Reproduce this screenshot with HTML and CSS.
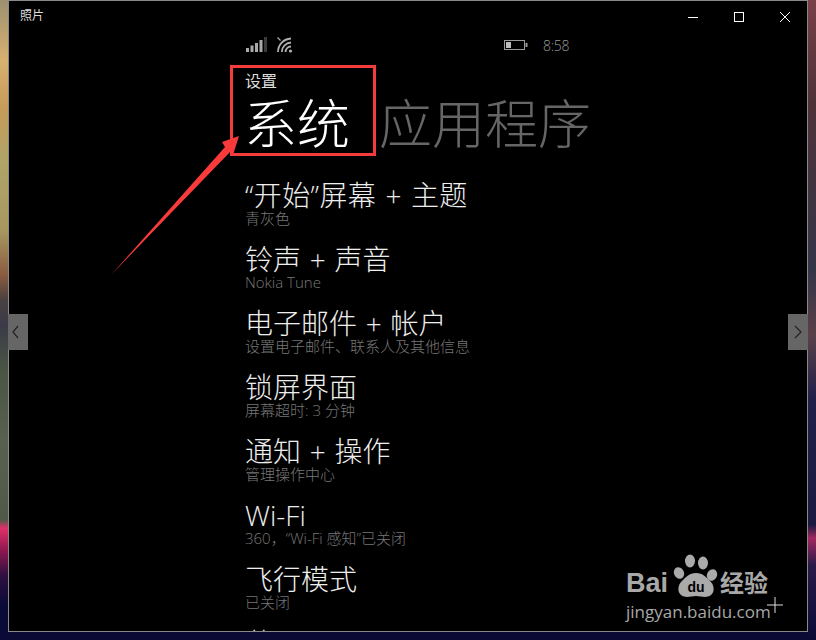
FILE: index.html
```html
<!DOCTYPE html>
<html>
    <head>
        <meta charset="UTF-8">
        <meta name="viewport" content="width=device-width, initial-scale=1.0">
        <title>照片</title>
        <link rel="stylesheet" href="styles.css">
    </head>
    <body>
        <div id="win">
            <div class="titlebar">
                <span class="apptitle">照片</span>
                <div class="winbtns">
                    <svg width="46" height="30" viewBox="0 0 46 30"><path d="M18 15.500h10" stroke="#fff" fill="none"/></svg>
                    <svg width="46" height="30" viewBox="0 0 46 30"><rect x="18.500" y="10.500" width="9" height="9" stroke="#fff" fill="none"/></svg>
                    <svg width="46" height="30" viewBox="0 0 46 30"><path d="M18 10l10 10M28 10l-10 10" stroke="#fff" fill="none"/></svg>
                </div>
            </div>
            <div id="phone">
                <div class="status">
                    <svg class="signal" width="22" height="16" viewBox="0 0 22 16">
                        <rect x="0" y="11" width="3" height="4" fill="#aaa"/>
                        <rect x="4.500" y="8.500" width="3" height="6.500" fill="#aaa"/>
                        <rect x="9" y="6" width="3" height="9" fill="#aaa"/>
                        <rect x="13.500" y="3" width="3" height="12" fill="#aaa"/>
                        <rect x="18" y="0" width="3" height="15" fill="#3a3a3a"/>
                    </svg>
                    <svg class="wifi" width="16" height="16" viewBox="0 0 16 16">
                        <path d="M0.500 0.500l3 3" stroke="#aaa" stroke-width="1.300" fill="none"/>
                        <path d="M1 15C1 8 6 2 14 1.500M4.800 15C4.800 10 8.500 6 14 5.500M8.600 15c0-3 2.200-5.400 5.400-5.500" stroke="#b0b0b0" stroke-width="1.800" fill="none"/>
                        <circle cx="13.500" cy="14" r="1.600" fill="#b0b0b0"/>
                    </svg>
                    <svg class="batt" width="25" height="12" viewBox="0 0 25 12">
                        <rect x="0.500" y="1.500" width="20" height="9" stroke="#999" fill="none"/>
                        <rect x="2" y="3" width="5" height="6" fill="#bbb"/>
                        <rect x="21.500" y="4" width="2" height="4" fill="#999"/>
                    </svg>
                    <span class="clock">8:58</span>
                </div>
                <div class="pivot-label">设置</div>
                <div class="pivot">
                    <span class="on">系统</span>
                    <span class="off">应用程序</span>
                </div>
                <div class="item"><div class="name wide">“开始”屏幕 + 主题</div><div class="sub">青灰色</div></div>
                <div class="item"><div class="name">铃声 + 声音</div><div class="sub">Nokia Tune</div></div>
                <div class="item"><div class="name">电子邮件 + 帐户</div><div class="sub">设置电子邮件、联系人及其他信息</div></div>
                <div class="item"><div class="name">锁屏界面</div><div class="sub">屏幕超时: 3 分钟</div></div>
                <div class="item"><div class="name">通知 + 操作</div><div class="sub">管理操作中心</div></div>
                <div class="item"><div class="name">Wi-Fi</div><div class="sub">360，“Wi-Fi 感知”已关闭</div></div>
                <div class="item"><div class="name">飞行模式</div><div class="sub">已关闭</div></div>
                <div class="item"><div class="name">蓝牙</div></div>
            </div>
        </div>

        <!-- things on top of the window -->
        <div class="nav" id="prev"><svg width="20" height="36" viewBox="0 0 20 36"><path d="M10 12l-5 6 5 6" stroke="#222" stroke-width="1.200" fill="none"/></svg></div>
        <div class="nav" id="next"><svg width="20" height="36" viewBox="0 0 20 36"><path d="M7 12l6 6-6 6" stroke="#222" stroke-width="1.200" fill="none"/></svg></div>
        <div id="redbox"></div>
        <svg id="arrow" width="140" height="150" viewBox="105 130 140 150">
            <polygon points="111,275 225,147 222,142 239,136 233,155 231,151" fill="#f93a3a"/>
        </svg>
        <div id="mark">
            <div class="markrow">
                <span class="bai">Bai</span>
                <svg class="paw" width="46" height="46" viewBox="0 0 46 46">
                    <ellipse cx="18" cy="7" rx="5" ry="6.500" fill="#aaa"/>
                    <ellipse cx="31" cy="9" rx="5" ry="6.500" fill="#aaa"/>
                    <ellipse cx="7" cy="19" rx="5" ry="6" fill="#aaa" transform="rotate(-25 7 19)"/>
                    <ellipse cx="40" cy="21" rx="5" ry="6" fill="#aaa" transform="rotate(25 40 21)"/>
                    <path d="M24 19c7 0 10 4 15 9 5 6 3 15-6 15-3 0-6-1-9-1s-6 1-9 1c-9 0-11-9-6-15 5-5 8-9 15-9z" fill="#aaa"/>
                    <text x="24" y="38" text-anchor="middle" class="du">du</text>
                </svg>
                <span class="jy">经验</span>
            </div>
            <div class="url">jingyan.baidu.com</div>
        </div>
        <svg id="cross" width="16" height="16" viewBox="0 0 16 16"><path d="M8 0v16M0 8h16" stroke="#ddd" fill="none"/></svg>
    </body>
</html>
```

FILE: styles.css
```css
html, body {
    margin:0;
    height:640px;
    overflow:hidden;
}
body {
    position:relative;
    font-family:"Open Sans", "Noto Sans CJK SC", sans-serif;
    background-color:#0a0a35;
    background-image:
        linear-gradient(#9c9070 0, #d8b070 60px, #c49a58 110px, #b0a468 160px, #a89860 230px, #8a5c40 275px, #4a4040 300px, #3a3a48 325px, #4a5544 370px, #586050 440px, #505848 520px, #e0306a 528px, #901850 550px, #301040 575px, #0a0a38 605px),
        linear-gradient(#7a4048 0, #4f3238 100px, #353548 270px, #5a4048 335px, #20204a 400px, #1a1a40 525px, #a02860 538px, #2a1a48 565px, #0a0a35 640px);
    background-size:8px 640px, 8px 640px;
    background-position:left top, right top;
    background-repeat:no-repeat;
}
#win {
    box-sizing:border-box;
    margin-left:8px;
    width:800px;
    height:632px;
    background:#000;
    border:1px solid #8a8a8a;
    overflow:hidden;
    color:#fff;
}
.titlebar {
    display:flex;
    justify-content:space-between;
    align-items:center;
    height:31px;
}
.apptitle {
    margin-left:11px;
    margin-bottom:3px;
    font-size:12px;
    color:#ddd;
}
.winbtns {
    display:flex;
    height:30px;
    margin-right:-1px;
}
#phone {
    padding-left:236px;
}
.status {
    display:flex;
    align-items:center;
    height:26px;
}
.signal {margin-left:1px;}
.wifi {margin-left:9px;}
.batt {margin-left:211px;}
.clock {
    margin-left:14px;
    font-size:14px;
    font-weight:300;
    letter-spacing:-0.3px;
    color:#999;
}
.pivot-label {
    margin-top:13px;
    font-size:16px;
    line-height:20px;
    color:#ddd;
}
.pivot {
    display:flex;
    gap:29px;
    margin-top:3px;
    margin-left:-1px;
    font-size:53px;
    line-height:60px;
    font-weight:300;
}
.pivot .on {color:#fff;}
.pivot .off {color:#666;}
.item {
    height:48px;
    margin-bottom:16px;
}
.pivot + .item {margin-top:25px;}
.name {
    margin-top:2px;
    font-size:28px;
    line-height:32px;
    font-weight:300;
    word-spacing:1.500px;
    color:#eee;
}
.name.wide {letter-spacing:0.4px;}
.sub {
    font-size:15px;
    line-height:14px;
    font-weight:300;
    color:#777;
}
.nav {
    position:absolute;
    top:314px;
    width:20px;
    height:36px;
    background:#666;
}
.nav svg {display:block;}
#prev {left:8px;}
#next {left:788px;}
#redbox {
    position:absolute;
    box-sizing:border-box;
    left:230px;
    top:65px;
    width:146px;
    height:91px;
    border:3px solid #f43c3c;
}
#arrow {
    position:absolute;
    left:105px;
    top:130px;
}
#mark {
    position:absolute;
    left:626px;
    top:552px;
    color:#a8a8a8;
}
.markrow {
    display:flex;
    align-items:flex-end;
    height:48px;
}
.bai {
    font-family:"Liberation Sans", sans-serif;
    font-size:27px;
    font-weight:bold;
    line-height:30px;
    margin-bottom:2px;
}
.paw {margin-left:4px; margin-bottom:0;}
.du {
    font-family:"Liberation Sans", sans-serif;
    font-size:14px;
    font-weight:bold;
    fill:#000;
}
.jy {
    margin-left:2px;
    margin-bottom:2px;
    font-size:24px;
    font-weight:bold;
    line-height:30px;
}
.url {
    font-size:17px;
    line-height:20px;
    margin-top:2px;
}
#cross {
    position:absolute;
    left:767px;
    top:597px;
}
```
